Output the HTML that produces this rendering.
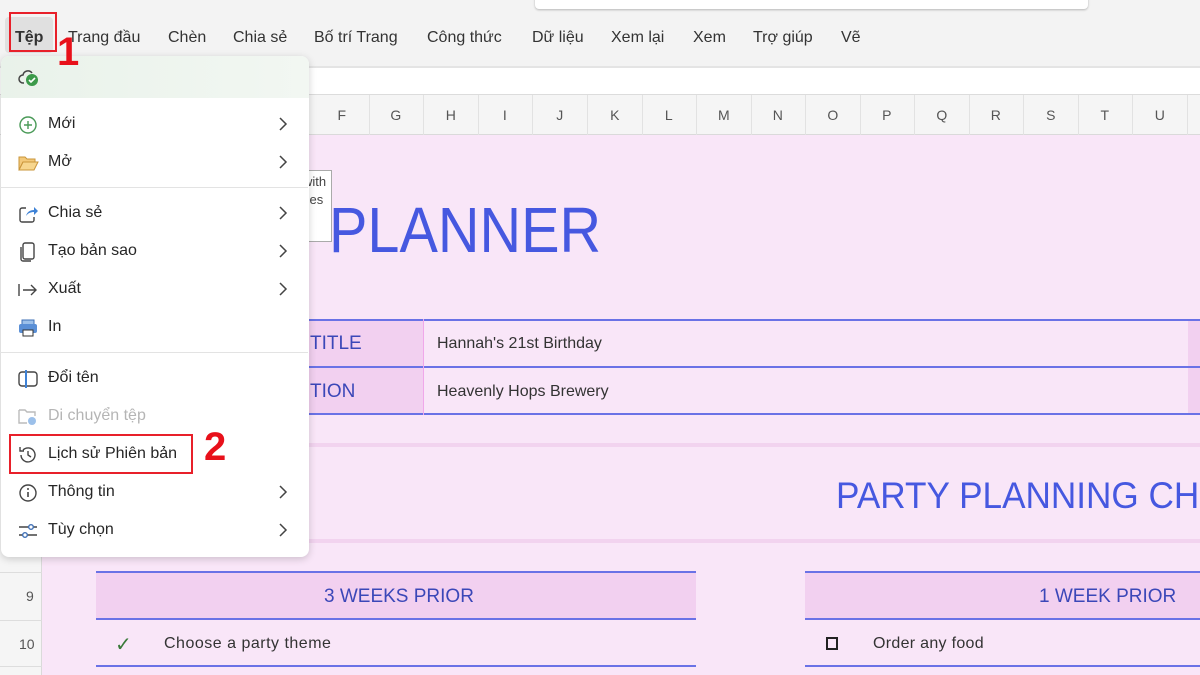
<!DOCTYPE html>
<html><head><meta charset="utf-8"><style>
*{margin:0;padding:0;box-sizing:border-box}
body{width:1200px;height:675px;overflow:hidden;position:relative;font-family:"Liberation Sans","DejaVu Sans",sans-serif;background:#f9e6f8}
.abs{position:absolute}
.tab{position:absolute;top:29px;font-size:16px;color:#333}
.col{position:absolute;top:95px;height:40px;line-height:40px;font-size:14px;color:#555;text-align:center;width:54.6px;border-right:1px solid #e2e2e2}
.mi{position:absolute;left:0;width:308px;height:38px;font-size:16px;color:#262626}
.mi .t{position:absolute;left:48px;top:10px}
.mi .ic{position:absolute;left:17px;top:9px;width:22px;height:22px}
.mi .ch{position:absolute;left:277px;top:11px}
.sep{position:absolute;left:0;width:308px;height:1px;background:#e3e3e3}
.hl{position:absolute;height:2px;background:#6a72e6}
</style></head><body>
<svg width="0" height="0" style="position:absolute"><defs><symbol id="chev" viewBox="0 0 12 16"><path d="M3 2l6 6-6 6" fill="none" stroke="#444" stroke-width="1.5"/></symbol></defs></svg>
<!-- ribbon -->
<div class="abs" style="left:0;top:0;width:1200px;height:67px;background:#f3f3f3"></div>
<div class="abs" style="left:535px;top:-10px;width:553px;height:19px;background:#fff;border-radius:4px;box-shadow:0 1px 2px rgba(0,0,0,.25)"></div>
<div class="abs" style="left:5px;top:17px;width:48px;height:36px;background:#e0e0e0;border-radius:4px"></div>
<div class="tab" style="left:15px;font-weight:bold;color:#333">Tệp</div>
<div class="tab" style="left:68px">Trang đầu</div>
<div class="tab" style="left:168px">Chèn</div>
<div class="tab" style="left:233px">Chia sẻ</div>
<div class="tab" style="left:314px">Bố trí Trang</div>
<div class="tab" style="left:427px">Công thức</div>
<div class="tab" style="left:532px">Dữ liệu</div>
<div class="tab" style="left:611px">Xem lại</div>
<div class="tab" style="left:693px">Xem</div>
<div class="tab" style="left:753px">Trợ giúp</div>
<div class="tab" style="left:841px">Vẽ</div>
<!-- formula bar -->
<div class="abs" style="left:0;top:66px;width:1200px;height:29px;background:#fff;border-top:2px solid #e4e4e4;border-bottom:1px solid #dcdcdc"></div>
<!-- column headers -->
<div class="abs" style="left:0;top:95px;width:1200px;height:40px;background:#f5f5f5;border-bottom:1px solid #dadada"></div>
<div class="col" style="left:315px">F</div><div class="col" style="left:369px">G</div><div class="col" style="left:424px">H</div><div class="col" style="left:478px">I</div><div class="col" style="left:533px">J</div><div class="col" style="left:588px">K</div><div class="col" style="left:642px">L</div><div class="col" style="left:697px">M</div><div class="col" style="left:751px">N</div><div class="col" style="left:806px">O</div><div class="col" style="left:860px">P</div><div class="col" style="left:915px">Q</div><div class="col" style="left:969px">R</div><div class="col" style="left:1024px">S</div><div class="col" style="left:1078px">T</div><div class="col" style="left:1133px">U</div>
<!-- row headers -->
<div class="abs" style="left:0;top:135px;width:42px;height:540px;background:#f5f5f5;border-right:1px solid #dadada"></div>
<div class="abs" style="left:0;top:572px;width:42px;height:1px;background:#ddd"></div>
<div class="abs" style="left:0;top:620px;width:42px;height:1px;background:#ddd"></div>
<div class="abs" style="left:0;top:666px;width:42px;height:1px;background:#ddd"></div>
<div class="abs" style="left:26px;top:588px;font-size:14px;color:#555">9</div>
<div class="abs" style="left:19px;top:636px;font-size:14px;color:#555">10</div>
<!-- sheet content -->
<div class="abs" style="left:329px;top:193px;font-size:64px;color:#4658e0;transform:scaleX(0.9);transform-origin:0 0">PLANNER</div>
<div class="abs" style="left:300px;top:170px;width:32px;height:72px;background:#fff;border:1px solid #aaa;font-size:13px;color:#444;line-height:18px;padding:2px 0 0 2px;overflow:hidden;white-space:nowrap">with<br>ses<br>l</div>
<div class="abs" style="left:308px;top:319px;width:116px;height:96px;background:#f2d0f0"></div>
<div class="abs" style="left:1188px;top:319px;width:12px;height:96px;background:#f2d0f0"></div>
<div class="hl" style="left:308px;top:319px;width:892px"></div>
<div class="hl" style="left:308px;top:366px;width:892px"></div>
<div class="hl" style="left:308px;top:413px;width:892px"></div>
<div class="abs" style="left:423px;top:319px;width:1px;height:96px;background:#f0a8ea"></div>
<div class="abs" style="left:310px;top:333px;font-size:19px;color:#3b47b8">TITLE</div>
<div class="abs" style="left:310px;top:381px;font-size:19px;color:#3b47b8">TION</div>
<div class="abs" style="left:437px;top:335px;font-size:16px;color:#333">Hannah's 21st Birthday</div>
<div class="abs" style="left:437px;top:383px;font-size:16px;color:#333">Heavenly Hops Brewery</div>
<div class="abs" style="left:42px;top:443px;width:1158px;height:4px;background:#f2d3ef"></div>
<div class="abs" style="left:836px;top:475px;font-size:37px;color:#4658e0;white-space:nowrap;transform:scaleX(0.95);transform-origin:0 0">PARTY PLANNING CH</div>
<div class="abs" style="left:42px;top:539px;width:1158px;height:4px;background:#f2d3ef"></div>
<div class="abs" style="left:96px;top:572px;width:600px;height:47px;background:#f2d0f0"></div>
<div class="abs" style="left:805px;top:572px;width:395px;height:47px;background:#f2d0f0"></div>
<div class="hl" style="left:96px;top:571px;width:600px"></div>
<div class="hl" style="left:96px;top:618px;width:600px"></div>
<div class="hl" style="left:96px;top:665px;width:600px"></div>
<div class="hl" style="left:805px;top:571px;width:395px"></div>
<div class="hl" style="left:805px;top:618px;width:395px"></div>
<div class="hl" style="left:805px;top:665px;width:395px"></div>
<div class="abs" style="left:324px;top:586px;font-size:19px;color:#3b47b8">3 WEEKS PRIOR</div>
<div class="abs" style="left:1039px;top:586px;font-size:19px;color:#3b47b8">1 WEEK PRIOR</div>
<div class="abs" style="left:115px;top:632px;font-size:20px;color:#3a7a3a">✓</div>
<div class="abs" style="left:164px;top:635px;font-size:16px;color:#333;letter-spacing:.5px">Choose a party theme</div>
<div class="abs" style="left:826px;top:637px;width:12px;height:13px;border:2px solid #222"></div>
<div class="abs" style="left:873px;top:635px;font-size:16px;color:#333;letter-spacing:.3px">Order any food</div>
<!-- menu -->
<div class="abs" style="left:1px;top:56px;width:308px;height:501px;background:#fff;border-radius:8px;box-shadow:0 2px 8px rgba(0,0,0,.18);overflow:hidden">
 <div class="abs" style="left:0;top:0;width:308px;height:42px;background:linear-gradient(90deg,#e9f2ea,#f2f7f2)"></div>
 <svg class="abs" style="left:17px;top:12px" width="22" height="20" viewBox="0 0 22 20"><path d="M6 15H5a4 4 0 0 1 0-8 5 5 0 0 1 9-2" fill="none" stroke="#444" stroke-width="1.5"/><circle cx="14" cy="12" r="6" fill="#3c9a4a"/><path d="M11 12l2 2 4-4" stroke="#fff" stroke-width="1.6" fill="none"/></svg>
</div>
<div class="mi" style="top:105px"><svg class="ic" viewBox="0 0 22 22"><circle cx="11" cy="11" r="8" fill="none" stroke="#4a9a58" stroke-width="1.4"/><path d="M11 7v8M7 11h8" stroke="#4a9a58" stroke-width="1.4"/></svg><span class="t">Mới</span><svg class="ch" width="12" height="16"><use href="#chev"/></svg></div>
<div class="mi" style="top:143px"><svg class="ic" viewBox="0 0 22 22"><path d="M2 5h6l2 2h8v3H6l-4 8z" fill="#f3c97a" stroke="#c9953a"/><path d="M2 18l4-8h15l-4 8z" fill="#f7d68e" stroke="#c9953a"/></svg><span class="t">Mở</span><svg class="ch" width="12" height="16"><use href="#chev"/></svg></div>
<div class="sep" style="top:187px"></div>
<div class="mi" style="top:194px"><svg class="ic" viewBox="0 0 22 22"><path d="M9 5H5a2 2 0 0 0-2 2v10a2 2 0 0 0 2 2h10a2 2 0 0 0 2-2v-3" fill="none" stroke="#444" stroke-width="1.4"/><path d="M9 13c1-4 4-6 8-6V4l4 4-4 4V9c-3 0-6 1-8 4z" fill="#3e82d6"/></svg><span class="t">Chia sẻ</span><svg class="ch" width="12" height="16"><use href="#chev"/></svg></div>
<div class="mi" style="top:232px"><svg class="ic" viewBox="0 0 22 22"><rect x="6" y="2" width="11" height="16" rx="2" fill="none" stroke="#444" stroke-width="1.4"/><path d="M4 6v12a2 2 0 0 0 2 2h8" fill="none" stroke="#444" stroke-width="1.4"/></svg><span class="t">Tạo bản sao</span><svg class="ch" width="12" height="16"><use href="#chev"/></svg></div>
<div class="mi" style="top:270px"><svg class="ic" viewBox="0 0 22 22"><path d="M2 5v12M6 11h13M14 6l5 5-5 5" fill="none" stroke="#444" stroke-width="1.4"/></svg><span class="t">Xuất</span><svg class="ch" width="12" height="16"><use href="#chev"/></svg></div>
<div class="mi" style="top:308px"><svg class="ic" viewBox="0 0 22 22"><rect x="5" y="3" width="12" height="5" fill="#9cc0ea" stroke="#3e6fb5"/><rect x="2" y="7" width="18" height="9" rx="2" fill="#5a8fd6"/><rect x="6" y="13" width="10" height="6" fill="#fff" stroke="#333"/></svg><span class="t">In</span></div>
<div class="sep" style="top:352px"></div>
<div class="mi" style="top:359px"><svg class="ic" viewBox="0 0 22 22"><rect x="2" y="4" width="18" height="14" rx="3" fill="none" stroke="#444" stroke-width="1.4"/><path d="M9 2v18" stroke="#3e82d6" stroke-width="2"/></svg><span class="t">Đổi tên</span></div>
<div class="mi" style="top:397px;color:#b5b5b5"><svg class="ic" viewBox="0 0 22 22"><path d="M2 4h6l2 2h8v4M2 4v13h8" fill="none" stroke="#bbb" stroke-width="1.4"/><circle cx="15" cy="15" r="4" fill="#9cc0ea"/></svg><span class="t">Di chuyển tệp</span></div>
<div class="mi" style="top:435px"><svg class="ic" viewBox="0 0 22 22"><path d="M4 11a7 7 0 1 0 2-5M3 3v4h4" fill="none" stroke="#444" stroke-width="1.4"/><path d="M11 7v4l3 2" fill="none" stroke="#444" stroke-width="1.4"/></svg><span class="t">Lịch sử Phiên bản</span></div>
<div class="mi" style="top:473px"><svg class="ic" viewBox="0 0 22 22"><circle cx="11" cy="11" r="8" fill="none" stroke="#444" stroke-width="1.4"/><path d="M11 10v5" stroke="#444" stroke-width="1.6"/><circle cx="11" cy="7" r="1" fill="#444"/></svg><span class="t">Thông tin</span><svg class="ch" width="12" height="16"><use href="#chev"/></svg></div>
<div class="mi" style="top:511px"><svg class="ic" viewBox="0 0 22 22"><path d="M2 7h18M2 15h18" stroke="#444" stroke-width="1.4"/><circle cx="14" cy="7" r="2.3" fill="#fff" stroke="#3e6fb5" stroke-width="1.4"/><circle cx="8" cy="15" r="2.3" fill="#fff" stroke="#3e6fb5" stroke-width="1.4"/></svg><span class="t">Tùy chọn</span><svg class="ch" width="12" height="16"><use href="#chev"/></svg></div>
<!-- red markers -->
<div class="abs" style="left:9px;top:12px;width:48px;height:40px;border:2px solid #e8202a"></div>
<div class="abs" style="left:57px;top:32px;font-size:40px;font-weight:bold;color:#e8101a;line-height:40px">1</div>
<div class="abs" style="left:9px;top:434px;width:184px;height:40px;border:2px solid #e8202a"></div>
<div class="abs" style="left:204px;top:427px;font-size:40px;font-weight:bold;color:#e8101a;line-height:40px">2</div>
</body></html>
